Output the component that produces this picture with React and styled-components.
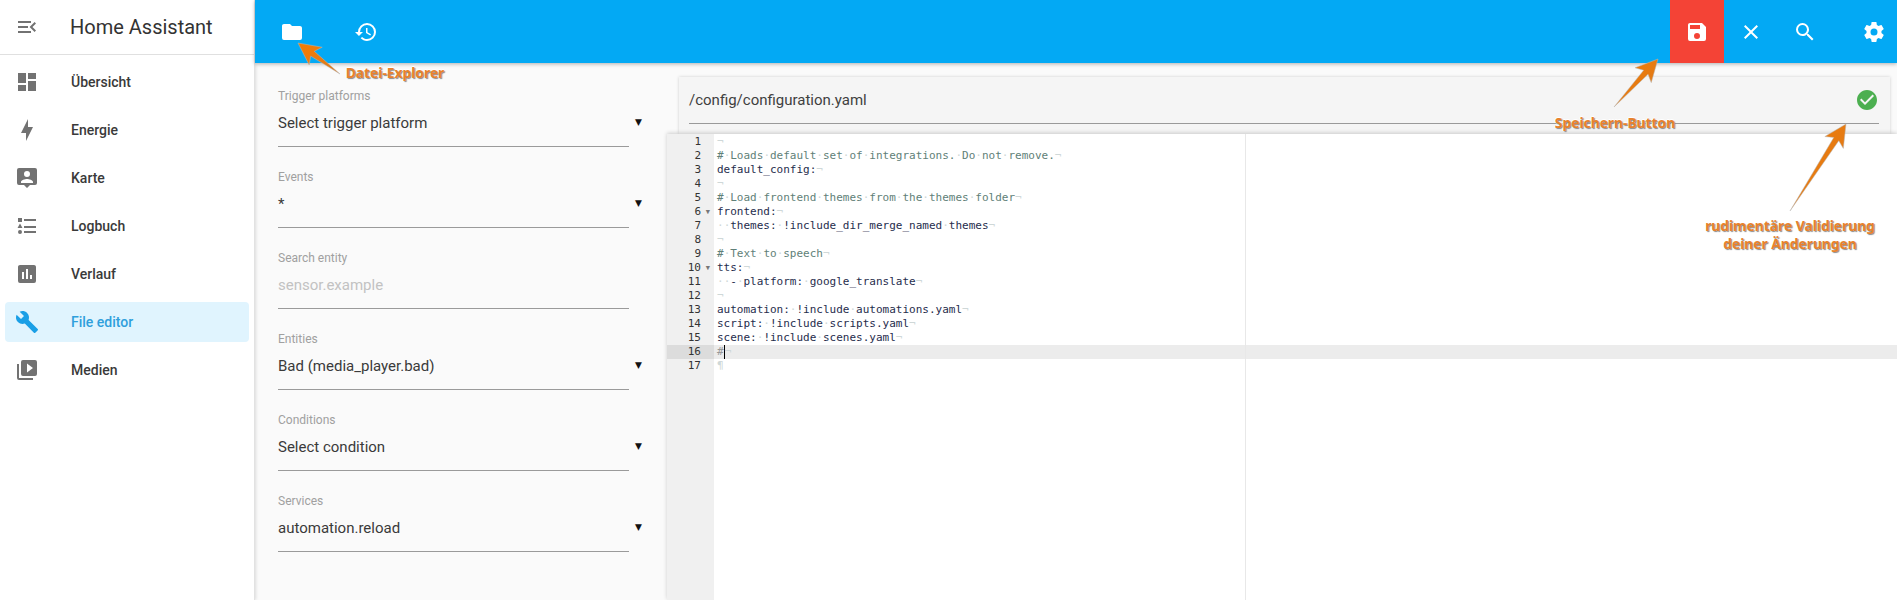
import React from 'react';
import styled, { createGlobalStyle } from 'styled-components';

const GlobalStyle = createGlobalStyle`
  html, body {
    margin: 0;
    padding: 0;
    height: 600px;
    overflow: hidden;
    background: #fff;
    font-family: Roboto, "Noto Sans", sans-serif;
  }
`;

const Shell = styled.div`
  position: relative;
  display: grid;
  grid-template-columns: 255px 1fr;
  width: 1897px;
  height: 600px;
  overflow: hidden;
`;

/* sidebar */
const Sidebar = styled.aside`
  background: #fff;
  border-right: 1px solid #e2e2e2;
  box-shadow: 1px 0 3px rgba(0, 0, 0, 0.12);
  z-index: 1;
`;

const SideHeader = styled.div`
  display: flex;
  align-items: center;
  height: 54px;
  border-bottom: 1px solid #e0e0e0;
  padding-left: 15px;
`;

const Title = styled.div`
  margin-left: 31px;
  font-size: 20px;
  color: #333;
`;

const NavList = styled.nav`
  display: flex;
  flex-direction: column;
  gap: 8px;
  padding: 7px 5px 0;
`;

const NavItem = styled.div`
  display: flex;
  align-items: center;
  height: 40px;
  padding-left: 10px;
  border-radius: 4px;
  background: ${(p) => (p.$active ? '#e0f4fe' : 'transparent')};
  color: ${(p) => (p.$active ? '#2f9fdc' : '#3a3a3a')};
  font-size: 14px;
  font-weight: 500;
  svg {
    fill: ${(p) => (p.$active ? '#1a9fe6' : '#727272')};
  }
`;

const NavLabel = styled.span`
  margin-left: 32px;
`;

const Icon = styled.svg.attrs({ viewBox: '0 0 24 24' })`
  width: ${(p) => p.$size || 24}px;
  height: ${(p) => p.$size || 24}px;
  flex: none;
  display: block;
  fill-rule: evenodd;
  fill: ${(p) => p.$fill || 'inherit'};
`;

/* main area */
const Main = styled.main`
  display: flex;
  flex-direction: column;
  min-width: 0;
`;

const Toolbar = styled.header`
  display: flex;
  align-items: stretch;
  height: 63px;
  background: #03a9f4;
  box-shadow: 0 1px 4px rgba(0, 0, 0, 0.3);
  z-index: 1;
  flex: none;
  svg {
    fill: #fff;
  }
`;

const ToolButton = styled.div`
  display: flex;
  align-items: center;
  justify-content: center;
  width: ${(p) => p.$width || 54}px;
  margin-left: ${(p) => p.$gap || 0}px;
  background: ${(p) => p.$bg || 'transparent'};
`;

const Spacer = styled.div`
  flex: 1;
`;

const Body = styled.div`
  display: flex;
  flex: 1;
  min-height: 0;
`;

const Panel = styled.section`
  width: 412px;
  flex: none;
  box-sizing: border-box;
  padding: 26px 38px 0 23px;
  background: #fafafa;
`;

const Field = styled.div`
  position: relative;
  height: 81px;
`;

const FieldLabel = styled.div`
  font-size: 12px;
  line-height: 14px;
  color: #a0a0a0;
`;

const FieldValue = styled.div`
  box-sizing: border-box;
  height: 44px;
  line-height: 22px;
  padding: 9px 0 13px;
  border-bottom: 1px solid #9a9a9a;
  font-size: 15px;
  color: ${(p) => (p.$placeholder ? '#c2c2c2' : '#3a3a3a')};
`;

const Caret = styled.span`
  position: absolute;
  right: -13px;
  top: 28px;
  font-size: 9px;
  color: #111;
  font-family: "DejaVu Sans", sans-serif;
`;

const EditorColumn = styled.section`
  flex: 1;
  min-width: 0;
  display: flex;
  flex-direction: column;
  padding-top: 14px;
  background: #fafafa;
`;

const FileCard = styled.div`
  display: flex;
  flex-direction: column;
  height: 57px;
  margin: 0 7px 0 12px;
  padding: 0 11px 0 10px;
  box-sizing: border-box;
  background: #f5f5f5;
  box-shadow: 0 0 3px rgba(0, 0, 0, 0.18);
  flex: none;
`;

const FileRow = styled.div`
  display: flex;
  align-items: center;
  justify-content: space-between;
  height: 47px;
  box-sizing: border-box;
  border-bottom: 1px solid #9a9a9a;
  font-size: 15px;
  color: #3f3f3f;
  svg {
    fill: #4caf50;
  }
`;

const Editor = styled.div`
  position: relative;
  flex: 1;
  display: flex;
  background: #fff;
  box-shadow: 0 -1px 4px rgba(0, 0, 0, 0.18);
  font-family: "DejaVu Sans Mono", monospace;
  font-size: 11px;
  line-height: 14px;
  overflow: hidden;
`;

const Gutter = styled.div`
  width: 47px;
  flex: none;
  background: #f0f0f0;
  color: #333;
  padding-top: 1px;
`;

const GutterCell = styled.div`
  position: relative;
  height: 14px;
  padding-right: 13px;
  text-align: right;
  background: ${(p) => (p.$active ? '#dcdcdc' : 'transparent')};
`;

const Fold = styled.span`
  position: absolute;
  right: 4px;
  top: 0;
  font-size: 7px;
  color: #777;
`;

const Code = styled.div`
  flex: 1;
  padding-top: 1px;
`;

const Line = styled.div`
  height: 14px;
  padding-left: 3px;
  white-space: pre;
  color: ${(p) => p.$color || '#1f2d4d'};
  background: ${(p) => (p.$active ? '#ececec' : 'transparent')};
`;

const Inv = styled.span`
  color: #cfd8d8;
`;

const Cursor = styled.span`
  display: inline-block;
  width: 1px;
  height: 14px;
  background: #000;
  vertical-align: top;
`;

const PrintMargin = styled.div`
  position: absolute;
  top: 0;
  bottom: 0;
  left: 578px;
  width: 1px;
  background: #e8e8e8;
`;

/* annotations painted over the screenshot */
const ArrowLayer = styled.svg`
  position: absolute;
  inset: 0;
  width: 1897px;
  height: 600px;
  z-index: 5;
  pointer-events: none;
`;

const Note = styled.div`
  position: absolute;
  left: ${(p) => p.$x}px;
  top: ${(p) => p.$y}px;
  width: ${(p) => p.$w}px;
  z-index: 6;
  text-align: center;
  font-family: "Noto Sans", sans-serif;
  font-size: 13.8px;
  font-weight: 700;
  line-height: 18px;
  color: #e8822c;
  text-shadow: 1px 1px 1px #8a8a8a, -1px 0 0 #fff, 0 -1px 0 #fff;
`;

const paths = {
  menu: 'M21,15.61L19.59,17L14.58,12L19.59,7L21,8.39L17.44,12L21,15.61M3,6H16V8H3V6M3,13V11H13V13H3M3,18V16H16V18H3Z',
  dashboard: 'M13,3V9H21V3M13,21H21V11H13M3,21H11V15H3M3,13H11V3H3V13Z',
  bolt: 'M11 15H6L13 1V9H18L11 23V15Z',
  map: 'M4,2H20a2,2 0 0 1 2,2V17a2,2 0 0 1-2,2H15L12,22L9,19H4a2,2 0 0 1-2-2V4a2,2 0 0 1 2-2ZM12,5a3,3 0 1 0 0,6a3,3 0 0 0 0-6ZM6,16c0-2 4-3 6-3s6,1 6,3v1H6Z',
  logbook: 'M5,9.5L7.5,14H2.5L5,9.5M3,4H7V8H3V4M5,20A2,2 0 0,0 7,18A2,2 0 0,0 5,16A2,2 0 0,0 3,18A2,2 0 0,0 5,20M9,5V7H21V5H9M9,19H21V17H9V19M9,14H21V12H9V14Z',
  chart: 'M19,3H5C3.89,3 3,3.89 3,5V19A2,2 0 0,0 5,21H19A2,2 0 0,0 21,19V5C21,3.89 20.1,3 19,3M9,17H7V10H9V17M13,17H11V7H13V17M17,17H15V13H17V17Z',
  wrench: 'M22.7,19L13.6,9.9C14.5,7.6 14,4.9 12.1,3C10.1,1 7.1,0.6 4.7,1.7L9,6L6,9L1.6,4.7C0.4,7.1 0.9,10.1 2.9,12.1C4.8,14 7.5,14.5 9.8,13.6L18.9,22.7C19.3,23.1 19.9,23.1 20.3,22.7L22.6,20.4C23.1,20 23.1,19.3 22.7,19Z',
  media: 'M4,6H2V20A2,2 0 0,0 4,22H18V20H4V6M20,2H8A2,2 0 0,0 6,4V16A2,2 0 0,0 8,18H20A2,2 0 0,0 22,16V4A2,2 0 0,0 20,2M12,14.5V5.5L18,10L12,14.5Z',
  folder: 'M10,4H4C2.89,4 2,4.89 2,6V18A2,2 0 0,0 4,20H20A2,2 0 0,0 22,18V8C22,6.89 21.1,6 20,6H12L10,4Z',
  history: 'M13.5,8H12V13L16.28,15.54L17,14.33L13.5,12.25V8M13,3A9,9 0 0,0 4,12H1L4.96,16.03L9,12H6A7,7 0 0,1 13,5A7,7 0 0,1 20,12A7,7 0 0,1 13,19C11.07,19 9.32,18.21 8.06,16.94L6.64,18.36C8.27,20 10.5,21 13,21A9,9 0 0,0 22,12A9,9 0 0,0 13,3',
  save: 'M15,9H5V5H15M12,19A3,3 0 0,1 9,16A3,3 0 0,1 12,13A3,3 0 0,1 15,16A3,3 0 0,1 12,19M17,3H5C3.89,3 3,3.9 3,5V19A2,2 0 0,0 5,21H19A2,2 0 0,0 21,19V7L17,3Z',
  close: 'M19,6.41L17.59,5L12,10.59L6.41,5L5,6.41L10.59,12L5,17.59L6.41,19L12,13.41L17.59,19L19,17.59L13.41,12L19,6.41Z',
  search: 'M9.5,3A6.5,6.5 0 0,1 16,9.5C16,11.11 15.41,12.59 14.44,13.73L14.71,14H15.5L20.5,19L19,20.5L14,15.5V14.71L13.73,14.44C12.59,15.41 11.11,16 9.5,16A6.5,6.5 0 0,1 3,9.5A6.5,6.5 0 0,1 9.5,3M9.5,5C7,5 5,7 5,9.5C5,12 7,14 9.5,14C12,14 14,12 14,9.5C14,7 12,5 9.5,5Z',
  cog: 'M12,15.5A3.5,3.5 0 0,1 8.5,12A3.5,3.5 0 0,1 12,8.5A3.5,3.5 0 0,1 15.5,12A3.5,3.5 0 0,1 12,15.5M19.43,12.97C19.47,12.65 19.5,12.33 19.5,12C19.5,11.67 19.47,11.34 19.43,11L21.54,9.37C21.73,9.22 21.78,8.95 21.66,8.73L19.66,5.27C19.54,5.05 19.27,4.96 19.05,5.05L16.56,6.05C16.04,5.66 15.5,5.32 14.87,5.07L14.5,2.42C14.46,2.18 14.25,2 14,2H10C9.75,2 9.54,2.18 9.5,2.42L9.13,5.07C8.5,5.32 7.96,5.66 7.44,6.05L4.95,5.05C4.73,4.96 4.46,5.05 4.34,5.27L2.34,8.73C2.21,8.95 2.27,9.22 2.46,9.37L4.57,11C4.53,11.34 4.5,11.67 4.5,12C4.5,12.33 4.53,12.65 4.57,12.97L2.46,14.63C2.27,14.78 2.21,15.05 2.34,15.27L4.34,18.73C4.46,18.95 4.73,19.03 4.95,18.95L7.44,17.94C7.96,18.34 8.5,18.68 9.13,18.93L9.5,21.58C9.54,21.82 9.75,22 10,22H14C14.25,22 14.46,21.82 14.5,21.58L14.87,18.93C15.5,18.67 16.04,18.34 16.56,17.94L19.05,18.95C19.27,19.03 19.54,18.95 19.66,18.73L21.66,15.27C21.78,15.05 21.73,14.78 21.54,14.63L19.43,12.97Z',
  check: 'M12 2C6.5 2 2 6.5 2 12S6.5 22 12 22 22 17.5 22 12 17.5 2 12 2M10 17L5 12L6.41 10.59L10 14.17L17.59 6.58L19 8L10 17Z',
};

const Glyph = ({ name, size, fill }) => (
  <Icon $size={size} $fill={fill}>
    <path d={paths[name]} />
  </Icon>
);

const navItems = [
  ['dashboard', 'Übersicht'],
  ['bolt', 'Energie'],
  ['map', 'Karte'],
  ['logbook', 'Logbuch'],
  ['chart', 'Verlauf'],
  ['wrench', 'File editor', true],
  ['media', 'Medien'],
];

const fields = [
  ['Trigger platforms', 'Select trigger platform', true],
  ['Events', '*', true],
  ['Search entity', 'sensor.example', false, true],
  ['Entities', 'Bad (media_player.bad)', true],
  ['Conditions', 'Select condition', true],
  ['Services', 'automation.reload', true],
];

const COMMENT = '#5f7f78';
const lines = [
  { text: '' },
  { text: '# Loads default set of integrations. Do not remove.', color: COMMENT },
  { text: 'default_config:' },
  { text: '' },
  { text: '# Load frontend themes from the themes folder', color: COMMENT },
  { text: 'frontend:', fold: true },
  { text: '  themes: !include_dir_merge_named themes' },
  { text: '' },
  { text: '# Text to speech', color: COMMENT },
  { text: 'tts:', fold: true },
  { text: '  - platform: google_translate' },
  { text: '' },
  { text: 'automation: !include automations.yaml' },
  { text: 'script: !include scripts.yaml' },
  { text: 'scene: !include scenes.yaml' },
  { text: '#', color: '#999', active: true },
  { text: '', last: true },
];

// spaces and line ends are shown by the editor as pale marks
const renderLine = (text) =>
  text.split(/( )/).map((part, i) =>
    part === ' ' ? <Inv key={i}>·</Inv> : <React.Fragment key={i}>{part}</React.Fragment>
  );

const arrowPoints = ([x1, y1], [x2, y2], head = 22, wing = 11) => {
  const len = Math.hypot(x2 - x1, y2 - y1);
  const ux = (x2 - x1) / len;
  const uy = (y2 - y1) / len;
  const nx = -uy;
  const ny = ux;
  const at = (along, side) => `${x2 - ux * along + nx * side},${y2 - uy * along + ny * side}`;
  return [
    `${x1},${y1}`,
    at(head - 4, 3),
    at(head, wing),
    `${x2},${y2}`,
    at(head, -wing),
    at(head - 4, -3),
  ].join(' ');
};

const arrows = [
  [[340, 74], [298, 43]],
  [[1614, 107], [1658, 59]],
  [[1790, 211], [1846, 124]],
];

const notes = [
  { x: 330, y: 64, w: 130, text: ['Datei-Explorer'] },
  { x: 1540, y: 114, w: 150, text: ['Speichern-Button'] },
  { x: 1690, y: 217, w: 200, text: ['rudimentäre Validierung', 'deiner Änderungen'] },
];

export default function App() {
  return (
    <Shell>
      <GlobalStyle />
      <Sidebar>
        <SideHeader>
          <Glyph name="menu" fill="#727272" />
          <Title>Home Assistant</Title>
        </SideHeader>
        <NavList>
          {navItems.map(([icon, label, active]) => (
            <NavItem key={label} $active={active}>
              <Glyph name={icon} />
              <NavLabel>{label}</NavLabel>
            </NavItem>
          ))}
        </NavList>
      </Sidebar>

      <Main>
        <Toolbar>
          <ToolButton $gap={10}><Glyph name="folder" /></ToolButton>
          <ToolButton $gap={20}><Glyph name="history" /></ToolButton>
          <Spacer />
          <ToolButton $bg="#f44336"><Glyph name="save" /></ToolButton>
          <ToolButton><Glyph name="close" /></ToolButton>
          <ToolButton><Glyph name="search" /></ToolButton>
          <ToolButton $width={46} $gap={19}><Glyph name="cog" /></ToolButton>
        </Toolbar>

        <Body>
          <Panel>
            {fields.map(([label, value, caret, placeholder]) => (
              <Field key={label}>
                <FieldLabel>{label}</FieldLabel>
                <FieldValue $placeholder={placeholder}>{value}</FieldValue>
                {caret && <Caret>▼</Caret>}
              </Field>
            ))}
          </Panel>

          <EditorColumn>
            <FileCard>
              <FileRow>
                /config/configuration.yaml
                <Glyph name="check" />
              </FileRow>
            </FileCard>
            <Editor>
              <Gutter>
                {lines.map((l, i) => (
                  <GutterCell key={i} $active={l.active}>
                    {i + 1}
                    {l.fold && <Fold>▼</Fold>}
                  </GutterCell>
                ))}
              </Gutter>
              <Code>
                {lines.map((l, i) => (
                  <Line key={i} $color={l.color} $active={l.active}>
                    {renderLine(l.text)}
                    {l.active && <Cursor />}
                    <Inv>{l.last ? '¶' : '¬'}</Inv>
                  </Line>
                ))}
              </Code>
              <PrintMargin />
            </Editor>
          </EditorColumn>
        </Body>
      </Main>

      <ArrowLayer>
        <defs>
          <linearGradient id="arrowFill" x1="0" y1="0" x2="1" y2="1">
            <stop offset="0" stopColor="#f57c00" />
            <stop offset="1" stopColor="#d97a22" />
          </linearGradient>
        </defs>
        {arrows.map(([from, to], i) => (
          <polygon key={i} points={arrowPoints(from, to)} fill="url(#arrowFill)" stroke="#b9b9b9" strokeWidth="0.5" />
        ))}
      </ArrowLayer>
      {notes.map((n) => (
        <Note key={n.text[0]} $x={n.x} $y={n.y} $w={n.w}>
          {n.text.map((t) => (
            <div key={t}>{t}</div>
          ))}
        </Note>
      ))}
    </Shell>
  );
}
